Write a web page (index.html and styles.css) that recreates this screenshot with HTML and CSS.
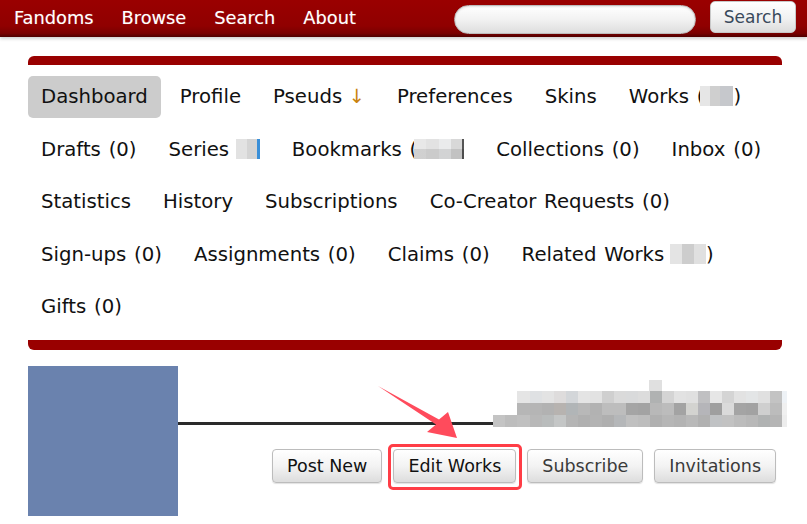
FILE: index.html
```html
<!DOCTYPE html>
<html lang="en">
<head>
<meta charset="utf-8">
<title>Dashboard</title>
<link rel="stylesheet" href="styles.css">
</head>
<body>
<header class="topbar">
  <nav class="primary">
    <a href="#">Fandoms</a>
    <a href="#">Browse</a>
    <a href="#">Search</a>
    <a href="#">About</a>
  </nav>
  <form class="search">
    <input class="search-input" type="text" aria-label="Search">
    <button class="search-btn" type="button">Search</button>
  </form>
</header>

<main class="page">
  <div class="dashboard">
    <ul class="dash-nav">
      <li class="current">Dashboard</li>
      <li>Profile</li>
      <li class="tight">Pseuds <span class="arrow">↓</span></li>
      <li>Preferences</li>
      <li>Skins</li>
      <li>Works (<span class="blur w-works"></span>)</li>
      <li>Drafts (0)</li>
      <li>Series <span class="blur w-series"></span></li>
      <li>Bookmarks (<span class="blur w-bookmarks"></span></li>
      <li>Collections (0)</li>
      <li>Inbox (0)</li>
      <li>Statistics</li>
      <li>History</li>
      <li>Subscriptions</li>
      <li>Co-Creator Requests (0)</li>
      <li>Sign-ups (0)</li>
      <li>Assignments (0)</li>
      <li>Claims (0)</li>
      <li>Related Works <span class="blur w-related"></span>)</li>
      <li>Gifts (0)</li>
    </ul>
  </div>

  <section class="profile">
    <div class="icon"></div>
    <div class="profile-main">
      <div class="heading">
        <svg class="name-mosaic" width="294" height="47" viewBox="0 0 294 47" aria-hidden="true">
          <rect x="156" y="0" width="13" height="11" fill="#e0e0e0"/>
          <g>
            <rect x="24" y="11" width="13" height="12" fill="#e5e5e5"/>
            <rect x="37" y="11" width="12" height="12" fill="#dfe1e3"/>
            <rect x="49" y="11" width="12" height="12" fill="#e3e3e3"/>
            <rect x="61" y="11" width="12" height="12" fill="#dedcdc"/>
            <rect x="73" y="11" width="12" height="12" fill="#d3d6d9"/>
            <rect x="85" y="11" width="12" height="12" fill="#e4e4e4"/>
            <rect x="97" y="11" width="12" height="12" fill="#e2e2e2"/>
            <rect x="109" y="11" width="12" height="12" fill="#cfcfcf"/>
            <rect x="121" y="11" width="12" height="12" fill="#dadada"/>
            <rect x="133" y="11" width="12" height="12" fill="#d9dadb"/>
            <rect x="145" y="11" width="12" height="12" fill="#dcdcdc"/>
            <rect x="157" y="11" width="12" height="12" fill="#b0b2b2"/>
            <rect x="169" y="11" width="12" height="12" fill="#d4d4d4"/>
            <rect x="181" y="11" width="12" height="12" fill="#e2e2e2"/>
            <rect x="193" y="11" width="12" height="12" fill="#e0e0e0"/>
            <rect x="205" y="11" width="12" height="12" fill="#c0c0c2"/>
            <rect x="217" y="11" width="12" height="12" fill="#e6e6e6"/>
            <rect x="229" y="11" width="12" height="12" fill="#d4d4d4"/>
            <rect x="241" y="11" width="12" height="12" fill="#e2e2e2"/>
            <rect x="253" y="11" width="12" height="12" fill="#e3e5e6"/>
            <rect x="265" y="11" width="12" height="12" fill="#e0e0e0"/>
            <rect x="277" y="11" width="12" height="12" fill="#c3c3c3"/>
            <rect x="289" y="11" width="5" height="12" fill="#eef2f6"/>
          </g>
          <g>
            <rect x="24" y="23" width="13" height="12" fill="#b6b6b6"/>
            <rect x="37" y="23" width="12" height="12" fill="#b5b5b5"/>
            <rect x="49" y="23" width="12" height="12" fill="#b2b2b2"/>
            <rect x="61" y="23" width="12" height="12" fill="#b7b3b0"/>
            <rect x="73" y="23" width="12" height="12" fill="#b1b5b7"/>
            <rect x="85" y="23" width="12" height="12" fill="#b8b8b8"/>
            <rect x="97" y="23" width="12" height="12" fill="#b2b2b2"/>
            <rect x="109" y="23" width="12" height="12" fill="#bdbdbd"/>
            <rect x="121" y="23" width="12" height="12" fill="#bdbdbd"/>
            <rect x="133" y="23" width="12" height="12" fill="#a5a5a5"/>
            <rect x="145" y="23" width="12" height="12" fill="#a3a3a3"/>
            <rect x="157" y="23" width="12" height="12" fill="#b8b8b8"/>
            <rect x="169" y="23" width="12" height="12" fill="#bcbcbc"/>
            <rect x="181" y="23" width="12" height="12" fill="#a3a3a3"/>
            <rect x="193" y="23" width="12" height="12" fill="#d3d3d0"/>
            <rect x="205" y="23" width="12" height="12" fill="#b5b5b9"/>
            <rect x="217" y="23" width="12" height="12" fill="#9f9f9f"/>
            <rect x="229" y="23" width="12" height="12" fill="#dadada"/>
            <rect x="241" y="23" width="12" height="12" fill="#a4a4a4"/>
            <rect x="253" y="23" width="12" height="12" fill="#a2a2a2"/>
            <rect x="265" y="23" width="12" height="12" fill="#cfcfcf"/>
            <rect x="277" y="23" width="12" height="12" fill="#bcbcbc"/>
            <rect x="289" y="23" width="5" height="12" fill="#f0f0f0"/>
          </g>
          <g>
            <rect x="0" y="35" width="12" height="12" fill="#c4c4c4"/>
            <rect x="12" y="35" width="12" height="12" fill="#bdbdbd"/>
            <rect x="24" y="35" width="13" height="12" fill="#c0c0c0"/>
            <rect x="37" y="35" width="12" height="12" fill="#b8b8b8"/>
            <rect x="49" y="35" width="12" height="12" fill="#b9bcbc"/>
            <rect x="61" y="35" width="12" height="12" fill="#c4c6c6"/>
            <rect x="73" y="35" width="12" height="12" fill="#b5b5b5"/>
            <rect x="85" y="35" width="12" height="12" fill="#b0b0b0"/>
            <rect x="97" y="35" width="12" height="12" fill="#b3b3b3"/>
            <rect x="109" y="35" width="12" height="12" fill="#afafaf"/>
            <rect x="121" y="35" width="12" height="12" fill="#b5b7b9"/>
            <rect x="133" y="35" width="12" height="12" fill="#c0c0c0"/>
            <rect x="145" y="35" width="12" height="12" fill="#bdbdbd"/>
            <rect x="157" y="35" width="12" height="12" fill="#b0b0b0"/>
            <rect x="169" y="35" width="12" height="12" fill="#b6b6b6"/>
            <rect x="181" y="35" width="12" height="12" fill="#b3b3b3"/>
            <rect x="193" y="35" width="12" height="12" fill="#b9b9b9"/>
            <rect x="205" y="35" width="12" height="12" fill="#b1b1b1"/>
            <rect x="217" y="35" width="12" height="12" fill="#c0c2c4"/>
            <rect x="229" y="35" width="12" height="12" fill="#c2c2c2"/>
            <rect x="241" y="35" width="12" height="12" fill="#bcbcbc"/>
            <rect x="253" y="35" width="12" height="12" fill="#b8b8b8"/>
            <rect x="265" y="35" width="12" height="12" fill="#b0b2b2"/>
            <rect x="277" y="35" width="12" height="12" fill="#b5b5b5"/>
            <rect x="289" y="35" width="5" height="12" fill="#ededed"/>
          </g>
        </svg>
      </div>
      <div class="actions">
        <button class="btn" type="button">Post New</button>
        <span class="highlight"><button class="btn" type="button">Edit Works</button></span>
        <button class="btn muted" type="button">Subscribe</button>
        <button class="btn muted" type="button">Invitations</button>
      </div>
    </div>
  </section>

  <svg class="pointer" width="100" height="70" viewBox="370 380 100 70" aria-hidden="true">
    <polygon points="378,386 439,419.5 448,412 457,438 427,432 436,424.5" fill="#ff4b5c"/>
  </svg>
</main>
</body>
</html>
```

FILE: styles.css
```css
* { box-sizing: border-box; }

html, body {
  margin: 0;
  padding: 0;
  background: #fff;
}

body {
  font-family: "DejaVu Sans", "Liberation Sans", sans-serif;
  color: #2a2a2a;
  width: 807px;
  height: 524px;
  overflow: hidden;
  position: relative;
}

/* ---------- top bar ---------- */
.topbar {
  height: 37px;
  display: flex;
  align-items: center;
  justify-content: space-between;
  padding: 0 11px 0 14px;
  background: linear-gradient(#9a0000 0%, #900000 70%, #7a0000 90%, #4e0000 100%);
  box-shadow: 0 2px 3px rgba(0, 0, 0, 0.18);
}

.primary {
  display: flex;
  gap: 28px;
  padding-bottom: 2px;
}

.primary a {
  color: #fff;
  text-decoration: none;
  font-size: 17.8px;
  text-shadow: 0 0 1px rgba(255, 255, 255, 0.35);
}

.search {
  display: flex;
  align-items: center;
  gap: 14px;
}

.search-input {
  width: 242px;
  height: 29px;
  margin-top: 1px;
  border: 1px solid #bdbdbd;
  border-radius: 15px;
  background: linear-gradient(#ffffff 0%, #f2f2f2 50%, #dedede 100%);
  box-shadow: inset 0 1px 2px rgba(0, 0, 0, 0.12);
}

.search-btn {
  width: 86px;
  height: 32px;
  margin-bottom: 3px;
  border: 1px solid #c8c8c8;
  border-radius: 5px;
  background: linear-gradient(#ffffff 0%, #f1f1f1 55%, #dcdcdc 100%);
  font-family: "DejaVu Sans", sans-serif;
  font-size: 17px;
  color: #3a4a5c;
  padding: 0;
}

/* ---------- dashboard nav ---------- */
.page {
  padding: 19px 25px 0 28px;
}

.dashboard {
  border-top: 9px solid #990000;
  border-bottom: 10px solid #990000;
  border-radius: 6px;
  padding: 11px 0 12px;
}

.dash-nav {
  list-style: none;
  margin: 0;
  padding: 0;
  display: flex;
  flex-wrap: wrap;
  column-gap: 6px;
  row-gap: 10.5px;
  font-size: 19.7px;
  word-spacing: 1.5px;
  color: #111;
}

.dash-nav li {
  height: 42px;
  line-height: 42px;
  padding: 0 13px;
  border-radius: 5px;
  white-space: nowrap;
}

.dash-nav li.tight {
  word-spacing: 0;
}

.dash-nav li.current {
  background: #cccccc;
}

.arrow {
  color: #c9830f;
}

.blur {
  display: inline-block;
  height: 20px;
  vertical-align: -3px;
}

.w-works {
  width: 33px;
  margin-left: -4px;
  background: linear-gradient(90deg, #e6e6e6 0 30%, #cfcfcf 30% 62%, #c6c8cc 62% 100%);
}

.w-series {
  width: 24px;
  margin-left: -1px;
  background: linear-gradient(90deg, #e2e2e2 0 45%, #d4d4d4 45% 88%, #3a8fd8 88% 100%);
}

.w-bookmarks {
  width: 50px;
  margin-left: -3px;
  background:
    linear-gradient(180deg, transparent 0 50%, rgba(0,0,0,0.1) 50% 100%),
    linear-gradient(90deg, #e8e8e8 0 25%, #e2e2e2 25% 50%, #eaebec 50% 75%, #d8d8d8 75% 96%, #555 96% 100%);
}

.w-related {
  width: 36px;
  margin-left: -2px;
  background: linear-gradient(90deg, #e4e4e4 0 33%, #cdcdcd 33% 66%, #e0e0e0 66% 100%);
}

/* ---------- profile ---------- */
.profile {
  display: flex;
  margin-top: 16px;
}

.icon {
  width: 150px;
  height: 150px;
  flex: none;
  background: #6a82ae;
}

.profile-main {
  flex: 1;
  display: flex;
  flex-direction: column;
}

.heading {
  height: 59px;
  border-bottom: 3px solid #2a2a2a;
  display: flex;
  justify-content: flex-end;
  align-items: flex-end;
}

.name-mosaic {
  display: block;
  margin-right: -5px;
  margin-bottom: -5px;
}

.actions {
  display: flex;
  justify-content: flex-end;
  gap: 11px;
  margin-top: 24px;
  padding-right: 6px;
}

.btn {
  height: 34px;
  padding: 0 14px;
  border: 1px solid #bcbcbc;
  border-radius: 4px;
  background: linear-gradient(#ffffff 0%, #f3f3f3 50%, #dddddd 100%);
  box-shadow: 0 1px 1px rgba(0, 0, 0, 0.12);
  font-family: "DejaVu Sans", sans-serif;
  font-size: 17.5px;
  color: #111;
}

.btn.muted {
  color: #3a3a3a;
}

.highlight {
  position: relative;
  display: inline-flex;
}

.highlight::after {
  content: "";
  position: absolute;
  left: -5px;
  right: -6px;
  top: -5px;
  bottom: -7px;
  border: 3px solid #ff3d46;
  border-radius: 5px;
  pointer-events: none;
}

.pointer {
  position: absolute;
  left: 370px;
  top: 380px;
}
```
